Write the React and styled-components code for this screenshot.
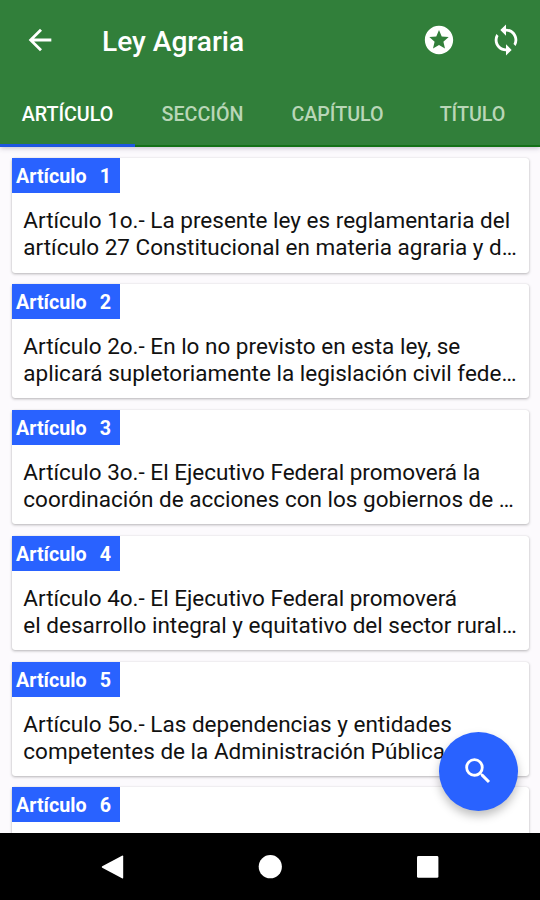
import * as React from "react";
import { useState } from "react";
import styled, { createGlobalStyle } from "styled-components";
import { MdArrowBack, MdStars, MdLoop, MdSearch } from "react-icons/md";

const tabs = ["Artículo", "Sección", "Capítulo", "Título"];

const articles = [
  { id: 1, lines: ["Artículo 1o.- La presente ley es reglamentaria del", "artículo 27 Constitucional en materia agraria y d…"] },
  { id: 2, lines: ["Artículo 2o.- En lo no previsto en esta ley, se", "aplicará supletoriamente la legislación civil fede…"] },
  { id: 3, lines: ["Artículo 3o.- El Ejecutivo Federal promoverá la", "coordinación de acciones con los gobiernos de …"] },
  { id: 4, lines: ["Artículo 4o.- El Ejecutivo Federal promoverá", "el desarrollo integral y equitativo del sector rural…"] },
  { id: 5, lines: ["Artículo 5o.- Las dependencias y entidades", "competentes de la Administración Pública"] },
  { id: 6, lines: [] },
];

function App() {
  const [active, setActive] = useState("Artículo");

  return (
    <Screen>
      <GlobalStyle />
      <Header>
        <Toolbar>
          <IconButton aria-label="Volver"><MdArrowBack /></IconButton>
          <Title>Ley Agraria</Title>
          <IconButton aria-label="Favoritos"><MdStars /></IconButton>
          <IconButton aria-label="Actualizar"><MdLoop /></IconButton>
        </Toolbar>
        <Tabs>
          {tabs.map((tab) => (
            <Tab key={tab} $active={tab === active} onClick={() => setActive(tab)}>
              {tab}
            </Tab>
          ))}
        </Tabs>
      </Header>
      <List>
        {articles.map((article) => (
          <Card key={article.id}>
            <Label>
              Artículo <span>{article.id}</span>
            </Label>
            <Text>
              {article.lines.map((line) => (
                <Line key={line}>{line}</Line>
              ))}
            </Text>
          </Card>
        ))}
      </List>
      <Fab aria-label="Buscar"><MdSearch /></Fab>
      <NavBar>
        <NavIcon viewBox="0 0 24 24">
          <path d="M2.2 11.3 22 .7q1.2-.6 1.2.8v21q0 1.4-1.2.8L2.2 12.7q-1-.7 0-1.4z" />
        </NavIcon>
        <NavIcon viewBox="0 0 24 24">
          <circle cx="12.3" cy="11.7" r="11.6" />
        </NavIcon>
        <NavIcon viewBox="0 0 24 24">
          <rect x="1" y="1" width="21.4" height="21.8" rx="1.4" />
        </NavIcon>
      </NavBar>
    </Screen>
  );
}

export default App;

const GlobalStyle = createGlobalStyle`
  * {
    box-sizing: border-box;
  }

  body {
    margin: 0;
    font-family: Roboto, sans-serif;
  }

  button {
    border: 0;
    padding: 0;
    background: none;
    color: inherit;
    font-family: inherit;
  }
`;

const Screen = styled.div`
  position: relative;
  display: flex;
  flex-direction: column;
  width: 540px;
  height: 900px;
  overflow: hidden;
  background: #fcfafd;
`;

const Header = styled.header`
  position: relative;
  flex: none;
  height: 147px;
  background: #317f3a;
  color: #fff;
  box-shadow: 0 1px 5px rgba(60, 50, 90, 0.3);
`;

const Toolbar = styled.div`
  display: flex;
  align-items: center;
  height: 80px;
  padding: 0 0 0 6px;
`;

const IconButton = styled.button`
  display: flex;
  align-items: center;
  justify-content: center;
  flex: none;
  width: 67.5px;
  height: 68px;

  svg {
    width: 34px;
    height: 34px;
  }
`;

const Title = styled.h1`
  flex: 1;
  margin: 3px 0 0 28.5px;
  font-size: 28.1px;
  font-weight: 500;
  line-height: 34px;
`;

const Tabs = styled.nav`
  display: grid;
  grid-template-columns: repeat(4, 1fr);
  height: 67px;
`;

const Tab = styled.button`
  height: 67px;
  padding-top: 4px;
  border-bottom: ${(props) => (props.$active ? "3px solid #1f56e0" : "2px solid #137117")};
  color: ${(props) => (props.$active ? "#fff" : "#b9d6b7")};
  font-size: 19.7px;
  font-weight: 500;
  text-transform: uppercase;
`;

const List = styled.main`
  flex: 1;
  min-height: 0;
  display: flex;
  flex-direction: column;
  gap: 11.4px;
  padding: 11px 11px 0 12px;
  overflow: hidden;
`;

const Card = styled.article`
  flex: none;
  height: 114.5px;
  border-radius: 3px;
  background: #fff;
  box-shadow: 0 1px 3px rgba(0, 0, 0, 0.28), 0 0 1px rgba(0, 0, 0, 0.12);
`;

const Label = styled.div`
  display: flex;
  justify-content: space-between;
  width: 108px;
  height: 35px;
  padding: 0 9px 0 4px;
  background: #2962ff;
  color: #fff;
  font-size: 19.7px;
  font-weight: 700;
  line-height: 38px;
`;

const Text = styled.div`
  padding: 14px 0 0 11.3px;
  color: #111;
  font-size: 22.5px;
  line-height: 27px;
`;

const Line = styled.p`
  margin: 0;
  white-space: nowrap;
`;

const Fab = styled.button`
  position: absolute;
  right: 22px;
  bottom: 89.5px;
  display: flex;
  align-items: center;
  justify-content: center;
  width: 79px;
  height: 79px;
  padding-right: 1px;
  border-radius: 50%;
  background: #2962ff;
  color: #fff;
  box-shadow: 0 5px 10px rgba(0, 0, 0, 0.25);

  svg {
    width: 34px;
    height: 34px;
  }
`;

const NavBar = styled.footer`
  position: relative;
  flex: none;
  display: flex;
  align-items: center;
  justify-content: center;
  gap: 134px;
  height: 67px;
  background: #000;
`;

const NavIcon = styled.svg`
  width: 24px;
  height: 24px;
  fill: #fff;
`;
